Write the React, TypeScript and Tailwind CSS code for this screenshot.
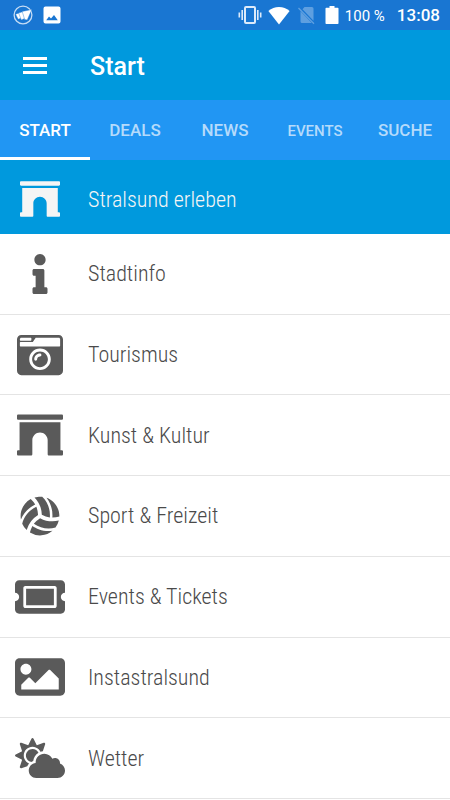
import { useState } from 'react';
import type { IconType } from 'react-icons';
import {
  FaArchway,
  FaCameraRetro,
  FaCloudSun,
  FaImage,
  FaInfo,
  FaTicketAlt,
  FaVolleyballBall,
} from 'react-icons/fa';

type MenuItem = {
  label: string;
  icon: IconType;
  iconClass: string;
};

const tabs = [
  { label: 'START', size: 'text-[17px]' },
  { label: 'DEALS', size: 'text-[17px]' },
  { label: 'NEWS', size: 'text-[17px]' },
  { label: 'EVENTS', size: 'text-[15px]' },
  { label: 'SUCHE', size: 'text-[17px]' },
];

const items: MenuItem[] = [
  { label: 'Stadtinfo', icon: FaInfo, iconClass: 'size-10' },
  { label: 'Tourismus', icon: FaCameraRetro, iconClass: 'size-[46px]' },
  { label: 'Kunst & Kultur', icon: FaArchway, iconClass: 'size-[46px]' },
  { label: 'Sport & Freizeit', icon: FaVolleyballBall, iconClass: 'size-10' },
  { label: 'Events & Tickets', icon: FaTicketAlt, iconClass: 'size-[50px]' },
  { label: 'Instastralsund', icon: FaImage, iconClass: 'size-[50px]' },
  { label: 'Wetter', icon: FaCloudSun, iconClass: 'size-[50px]' },
];

function StatusBar() {
  return (
    <div className="flex h-[30px] items-center bg-[#1976d2] px-[10px] text-white">
      <div className="flex items-center gap-[10px] pl-[3px]">
        <svg viewBox="0 0 20 20" className="size-5">
          <circle cx="10" cy="10" r="8.9" fill="none" stroke="#c5dcf5" strokeWidth="1.3" />
          <g fill="white" stroke="#1976d2" strokeWidth=".4" strokeLinejoin="round">
            <path d="M2.600 9.200 6.500 7.800 8.400 13 5.200 14.300z" />
            <path d="m5.600 8 4.600-1.400 2 6.700-3.900 1.600z" />
            <path d="m9.200 6.400 9.600-1.800-4.600 10.400-2.600-.6z" />
          </g>
        </svg>
        <svg viewBox="0 0 18 18" className="size-[18px]">
          <path
            fillRule="evenodd"
            fill="white"
            d="M2.500.5h13a2 2 0 0 1 2 2v13a2 2 0 0 1-2 2h-13a2 2 0 0 1-2-2v-13a2 2 0 0 1 2-2zm.7 13.700h11.600L11 9l-3 3.600-2-2z"
          />
        </svg>
      </div>
      <div className="ml-auto flex items-center gap-[6px]">
        <svg viewBox="0 0 24 20" className="h-5 w-6">
          <rect x="7" y="2" width="10" height="16" rx="1" fill="none" stroke="#dceafa" strokeWidth="2" />
          <path
            d="M4.200 5v10M19.800 5v10M1.300 7.500v5M22.700 7.500v5"
            fill="none"
            stroke="#dceafa"
            strokeWidth="1.600"
          />
        </svg>
        <svg viewBox="0 0 22 19" className="h-[19px] w-[22px]" fill="white">
          <path d="M11 18.5.4 5A17 17 0 0 1 11 1a17 17 0 0 1 10.6 4z" />
        </svg>
        <svg viewBox="0 0 18 20" className="ml-[1px] h-5 w-[18px]">
          <path
            d="M7.500 2H15a1.500 1.500 0 0 1 1.500 1.500v12.200L5.500 4.200zM3.500 6.200 14.800 18H5a1.500 1.500 0 0 1-1.500-1.500z"
            fill="#5e9fe0"
          />
          <path d="m1.500 3 15.500 15.800" stroke="#5e9fe0" strokeWidth="1.300" />
        </svg>
        <svg viewBox="0 0 14 20" className="ml-1 h-5 w-[14px]" fill="white">
          <path d="M4.500 1h5v1.800h3.200a.8.8 0 0 1 .8.8v14.600a.8.8 0 0 1-.8.8H1.300a.8.8 0 0 1-.8-.8V3.600a.8.8 0 0 1 .8-.8h3.200z" />
        </svg>
        <span className="pt-[2px] text-[15px]">100 %</span>
        <span className="ml-[6px] pt-[2px] text-[17px] font-medium">13:08</span>
      </div>
    </div>
  );
}

export default function App() {
  const [active, setActive] = useState('START');

  return (
    <div className="flex min-h-screen flex-col bg-white pb-px font-['Roboto',sans-serif]">
      <StatusBar />

      <header className="flex h-[70px] items-center bg-[#0099dd] text-white">
        <button type="button" aria-label="Menü" className="ml-[23px] flex w-6 flex-col gap-1">
          <span className="h-[3px] bg-white" />
          <span className="h-[3px] bg-white" />
          <span className="h-[3px] bg-white" />
        </button>
        <h1 className="ml-[43px] pt-1 text-[25px] font-medium">Start</h1>
      </header>

      <nav className="grid h-[60px] grid-cols-5 bg-[#2196f3]">
        {tabs.map((tab) => (
          <button
            key={tab.label}
            type="button"
            onClick={() => setActive(tab.label)}
            className={`border-b-3 pt-[5px] font-medium ${tab.size} ${
              active === tab.label ? 'border-white text-white' : 'border-transparent text-[#b5dbfb]'
            }`}
          >
            {tab.label}
          </button>
        ))}
      </nav>

      <main className="flex flex-1 flex-col font-['Roboto_Condensed','Roboto',sans-serif] text-[22px] font-light">
        <a href="#erleben" className="flex h-[74px] items-center bg-[#0099dd] pt-1 text-[#f5f5f5]">
          <span className="flex w-20 justify-center">
            <FaArchway className="size-10" />
          </span>
          <span className="pl-2">Stralsund erleben</span>
        </a>
        <ul className="grid flex-1 auto-rows-fr">
          {items.map(({ label, icon: Icon, iconClass }) => (
            <li key={label} className="flex min-h-16 border-b border-[#e4e4e4]">
              <a href="#menu" className="flex flex-1 items-center text-[#4a4a4a]">
                <span className="flex w-20 justify-center text-[#5a5a5a]">
                  <Icon className={iconClass} />
                </span>
                <span className="pl-2">{label}</span>
              </a>
            </li>
          ))}
        </ul>
      </main>
    </div>
  );
}
